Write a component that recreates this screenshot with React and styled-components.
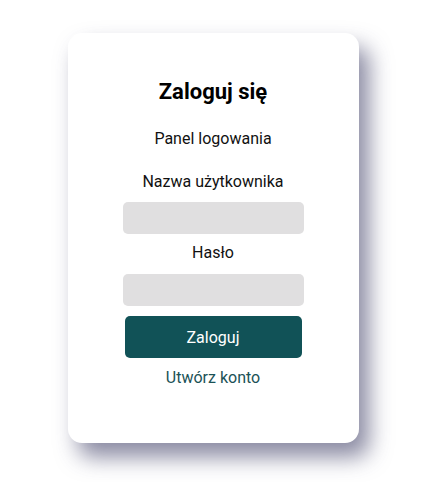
import React from "react";
import styled, { createGlobalStyle } from "styled-components";

const GlobalStyle = createGlobalStyle`
  body {
    margin: 0;
    background: #ffffff;
    font-family: Roboto, "Liberation Sans", sans-serif;
  }
`;

const Page = styled.div`
  min-height: 100vh;
  box-sizing: border-box;
  display: flex;
  justify-content: center;
  align-items: flex-start;
  padding: 33px 0 40px;
`;

const Card = styled.form`
  width: 291px;
  height: 410px;
  box-sizing: border-box;
  padding-top: 45px;
  background: #ffffff;
  border-radius: 14px;
  box-shadow: 10px 14px 22px rgba(60, 60, 100, 0.6);
  display: flex;
  flex-direction: column;
  align-items: center;
`;

const Title = styled.h1`
  margin: 0 0 23px;
  font-size: 22px;
  line-height: 28px;
  font-weight: 700;
  color: #000000;
`;

const Text = styled.p`
  margin: 0 0 ${(p) => p.$gap}px;
  font-size: 16px;
  line-height: 20px;
  color: #111111;
`;

const Label = styled.label`
  margin-bottom: ${(p) => p.$gap}px;
  font-size: 16px;
  line-height: 20px;
  color: #111111;
`;

const Input = styled.input`
  width: 181px;
  height: 32px;
  box-sizing: border-box;
  border: none;
  border-radius: 5px;
  background: #e0dfe0;
  margin: 0 0 ${(p) => p.$gap}px;
  outline: none;
`;

const Button = styled.button`
  width: 177px;
  height: 42px;
  border: none;
  border-radius: 5px;
  background: #115257;
  color: #ffffff;
  font-family: Roboto, "Liberation Sans", sans-serif;
  font-size: 16px;
  margin: 0 0 10px;
  cursor: pointer;
`;

const Link = styled.a`
  font-size: 16px;
  line-height: 20px;
  color: #1b5256;
  text-decoration: none;
  cursor: pointer;
`;

export default function App() {
  return (
    <>
      <GlobalStyle />
      <Page>
        <Card onSubmit={(e) => e.preventDefault()}>
          <Title>Zaloguj się</Title>
          <Text $gap={23}>Panel logowania</Text>
          <Label $gap={10}>Nazwa użytkownika</Label>
          <Input $gap={9} />
          <Label $gap={11}>Hasło</Label>
          <Input type="password" $gap={10} />
          <Button>Zaloguj</Button>
          <Link>Utwórz konto</Link>
        </Card>
      </Page>
    </>
  );
}
